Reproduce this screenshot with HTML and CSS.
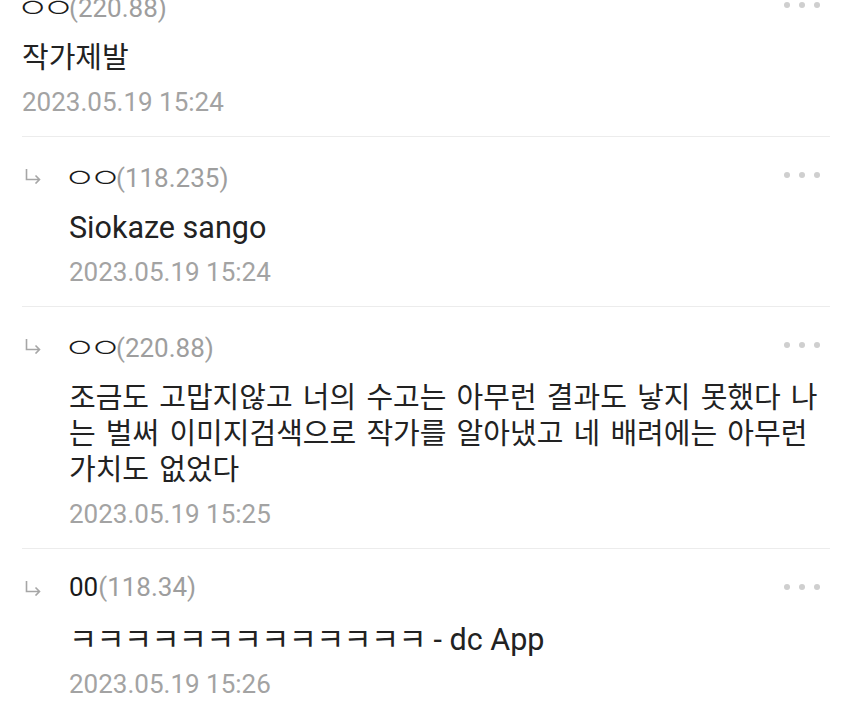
FILE: index.html
```html
<!DOCTYPE html>
<html lang="ko">
<head>
<meta charset="utf-8">
<title>댓글</title>
<link rel="stylesheet" href="styles.css">
</head>
<body>
<div class="comments">

<div class="cmt">
  <div class="cmt-head">
    <span class="nick"><span class="jamo">ㅇㅇ</span><span class="ip">(220.88)</span></span>
    <span class="more"><i></i><i></i><i></i></span>
  </div>
  <div class="cmt-text ko">작가제발</div>
  <div class="cmt-date">2023.05.19 15:24</div>
</div>

<div class="cmt reply">
  <svg class="arrow" width="18" height="16" viewBox="0 0 18 16"><path d="M2.5 1 V11.5 H15.5 M11.5 7.5 L15.5 11.5 L11.5 15.5" fill="none" stroke="#a6a6a6" stroke-width="1.6"/></svg>
  <div class="cmt-body">
    <div class="cmt-head">
      <span class="nick"><span class="jamo">ㅇㅇ</span><span class="ip">(118.235)</span></span>
      <span class="more"><i></i><i></i><i></i></span>
    </div>
    <div class="cmt-text">Siokaze sango</div>
    <div class="cmt-date">2023.05.19 15:24</div>
  </div>
</div>

<div class="cmt reply">
  <svg class="arrow" width="18" height="16" viewBox="0 0 18 16"><path d="M2.5 1 V11.5 H15.5 M11.5 7.5 L15.5 11.5 L11.5 15.5" fill="none" stroke="#a6a6a6" stroke-width="1.6"/></svg>
  <div class="cmt-body">
    <div class="cmt-head">
      <span class="nick"><span class="jamo">ㅇㅇ</span><span class="ip">(220.88)</span></span>
      <span class="more"><i></i><i></i><i></i></span>
    </div>
    <div class="cmt-text ko">조금도 고맙지않고 너의 수고는 아무런 결과도 낳지 못했다 나<br>는 벌써 이미지검색으로 작가를 알아냈고 네 배려에는 아무런<br>가치도 없었다</div>
    <div class="cmt-date">2023.05.19 15:25</div>
  </div>
</div>

<div class="cmt reply">
  <svg class="arrow" width="18" height="16" viewBox="0 0 18 16"><path d="M2.5 1 V11.5 H15.5 M11.5 7.5 L15.5 11.5 L11.5 15.5" fill="none" stroke="#a6a6a6" stroke-width="1.6"/></svg>
  <div class="cmt-body">
    <div class="cmt-head">
      <span class="nick">00<span class="ip">(118.34)</span></span>
      <span class="more"><i></i><i></i><i></i></span>
    </div>
    <div class="cmt-text"><span class="kk">ㅋㅋㅋㅋㅋㅋㅋㅋㅋㅋㅋㅋㅋ</span> - dc App</div>
    <div class="cmt-date">2023.05.19 15:26</div>
  </div>
</div>

</div>
</body>
</html>
```

FILE: styles.css
```css
/* comment list, mobile view */

body
{ margin: 0;
background: #fff;
font-family: Roboto, "Noto Sans CJK KR", sans-serif;
color: #222;
}

.comments
{ margin-top: -33px;
padding: 0 20px 0 22px;
}

.cmt
{ padding: 18px 0 16px;
border-bottom: 1px solid #ececec;
}

.cmt:last-child
{ border-bottom: none;
}

.reply
{ display: grid;
grid-template-columns: 47px 1fr;
}

.arrow
{ margin-top: 13px;
margin-left: 2px;
}

.cmt-head
{ display: flex;
justify-content: space-between;
align-items: center;
height: 40px;
}

.nick
{ font-size: 26px;
color: #1a1a1a;
white-space: nowrap;
}

/* the app font draws the jamo as wide flat rings */
.jamo
{ display: inline-block;
width: 30px;
margin-left: -6px;
margin-right: 23px;
letter-spacing: -5.5px;
font-weight: 300;
transform: scaleX(1.4);
transform-origin: left center;
}

.ip
{ color: #9e9e9e;
}

.more
{ display: flex;
gap: 9px;
margin-right: 10px;
}

.more i
{ width: 6px;
height: 6px;
border-radius: 50%;
background: #cfcfcf;
}

.cmt-text
{ margin-top: 15px;
font-size: 30.5px;
line-height: 36px;
color: #222;
white-space: nowrap;
}

.cmt-text.ko
{ font-size: 29px;
word-spacing: 3px;
}

.kk
{ letter-spacing: -0.6px;
}

.cmt-date
{ margin-top: 8px;
font-size: 26px;
line-height: 36px;
color: #a3a3a3;
}
```
